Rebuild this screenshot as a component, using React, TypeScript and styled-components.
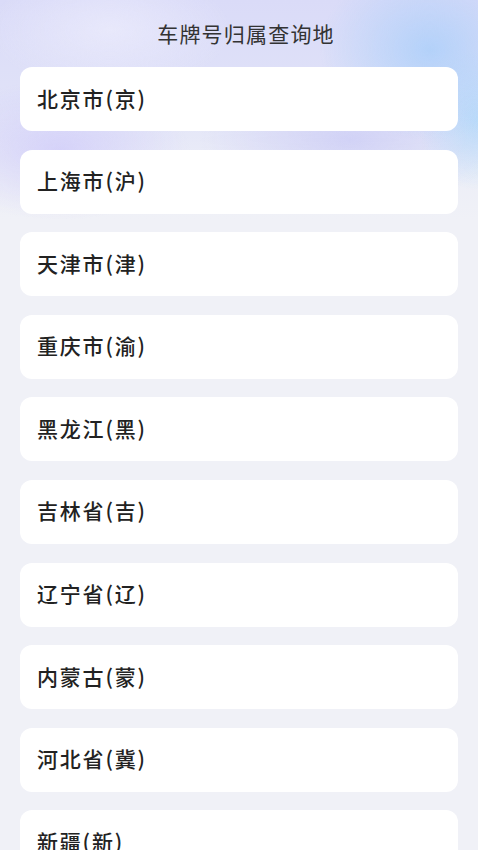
import React from 'react';
import styled, { createGlobalStyle } from 'styled-components';

const GlobalStyle = createGlobalStyle`
  html, body {
    margin: 0;
    padding: 0;
    background: #f0f1f7;
    font-family: "Noto Sans CJK SC", "Noto Sans", sans-serif;
  }
`;

const Page = styled.div`
  min-height: 850px;
  background:
    radial-gradient(ellipse 110px 90px at 430px 50px, rgba(165, 205, 250, 0.75), rgba(165, 205, 250, 0) 100%),
    radial-gradient(ellipse 60px 70px at 478px 120px, rgba(170, 215, 250, 0.7), rgba(170, 215, 250, 0) 100%),
    radial-gradient(ellipse 130px 70px at 60px 150px, rgba(205, 200, 250, 0.7), rgba(205, 200, 250, 0) 100%),
    radial-gradient(ellipse 150px 70px at 350px 140px, rgba(195, 195, 245, 0.6), rgba(195, 195, 245, 0) 100%),
    radial-gradient(ellipse 120px 60px at 110px 30px, rgba(235, 235, 252, 0.8), rgba(235, 235, 252, 0) 100%),
    linear-gradient(180deg, #dadbf8 0px, #e0e2f8 100px, #eceef7 170px, #f0f1f7 220px);
  overflow: hidden;
`;

const Header = styled.div`
  height: 67px;
  display: flex;
  align-items: center;
  justify-content: center;
  font-size: 21px;
  letter-spacing: 1.2px;
  color: #333;
  padding: 0 0 1px 14px;
  box-sizing: border-box;
`;

const List = styled.div`
  display: flex;
  flex-direction: column;
  gap: 18.6px;
  padding: 0 20px;
`;

const Card = styled.div`
  height: 64px;
  background: #fff;
  border-radius: 12px;
  display: flex;
  align-items: center;
  padding: 0 0 3px 17px;
  box-sizing: border-box;
  font-size: 21px;
  letter-spacing: 1.8px;
  font-weight: 500;
  color: #222;
`;

const regions = [
  '北京市(京)',
  '上海市(沪)',
  '天津市(津)',
  '重庆市(渝)',
  '黑龙江(黑)',
  '吉林省(吉)',
  '辽宁省(辽)',
  '内蒙古(蒙)',
  '河北省(冀)',
  '新疆(新)',
];

const App: React.FC = () => (
  <Page>
    <GlobalStyle />
    <Header>车牌号归属查询地</Header>
    <List>
      {regions.map((r) => (
        <Card key={r}>{r}</Card>
      ))}
    </List>
  </Page>
);

export default App;
